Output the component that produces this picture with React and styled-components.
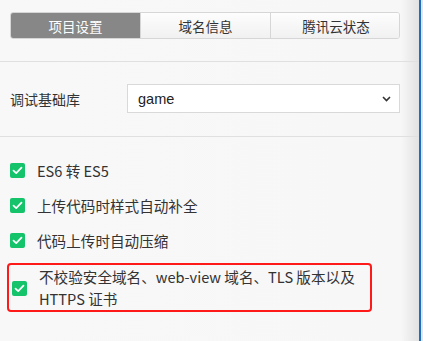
import React from "react";
import styled, { createGlobalStyle } from "styled-components";

const Global = createGlobalStyle`
  html, body { margin: 0; padding: 0; background: #f7f7f7; }
  body { font-family: "Noto Sans CJK SC", "Noto Sans", sans-serif; color: #333; }
`;

const Frame = styled.div`
  display: flex;
  width: 423px;
  height: 341px;
  overflow: hidden;
`;

const Panel = styled.div`
  width: 419px;
  height: 100%;
  background: linear-gradient(to right, #f8f8f8 0, #f7f7f7 calc(100% - 18px), #e2e2e2 100%);
  display: flex;
  flex-direction: column;
`;

const Edge = styled.div`
  width: 2px;
  background: #1d6dc4;
  border-right: 2px solid #dfe8f2;
`;

const Tabs = styled.div`
  display: grid;
  grid-template-columns: 129px 130px 131px;
  margin: 12px 0 0 10px;
  height: 27px;
  border-radius: 3px;
  overflow: hidden;
  border: 1px solid #d6d6d6;
  box-sizing: border-box;
  width: 390px;
`;

const Tab = styled.div`
  display: flex;
  align-items: center;
  justify-content: center;
  font-size: 13.5px;
  color: ${(p) => (p.$active ? "#fff" : "#333")};
  background: ${(p) => (p.$active ? "#878787" : "linear-gradient(#fdfdfd, #f1f1f1)")};
  border-left: ${(p) => (p.$first ? "none" : "1px solid #d6d6d6")};
`;

const Section = styled.div`
  padding: ${(p) => p.$pad};
  border-top: ${(p) => (p.$line ? "1px solid #e0e0e0" : "none")};
`;

const FieldRow = styled.div`
  display: flex;
  align-items: center;
  height: 29px;
`;

const Label = styled.div`
  width: 117px;
  padding-left: 10px;
  font-size: 14px;
  color: #333;
`;

const Select = styled.div`
  width: 273px;
  height: 29px;
  box-sizing: border-box;
  background: #fff;
  border: 1px solid #d9d9d9;
  display: flex;
  align-items: center;
  justify-content: space-between;
  padding: 0 8px 0 10px;
  font-family: "Liberation Sans", Arial, sans-serif;
  font-size: 14.5px;
  color: #222;
`;

const List = styled.div`
  display: flex;
  flex-direction: column;
`;

const Row = styled.div`
  display: flex;
  align-items: center;
  height: 35px;
  padding-left: 10px;
  gap: 12px;
  font-size: 14.6px;
  color: #333;
`;

const Marked = styled.div`
  display: flex;
  align-items: center;
  gap: 12px;
  margin: 5px 0 0 7px;
  width: 365px;
  box-sizing: border-box;
  border: 2px solid #ff1a1a;
  border-radius: 4px;
  padding: 1px 0 0 3px;
  font-size: 14.6px;
  line-height: 22px;
  color: #333;
`;

const Box = styled.div`
  flex: none;
  width: 15px;
  height: 15px;
  border-radius: 2px;
  background: #15c36b;
  display: flex;
  align-items: center;
  justify-content: center;
`;

const Text = styled.div`
  width: 322px;
`;

const Check = () => (
  <Box>
    <svg width="11" height="9" viewBox="0 0 11 9">
      <path d="M1.5 4.6 L4.2 7.2 L9.5 1.6" fill="none" stroke="#fff" strokeWidth="1.7" strokeLinecap="round" strokeLinejoin="round" />
    </svg>
  </Box>
);

export default function App() {
  return (
    <>
      <Global />
      <Frame>
        <Panel>
          <Section $pad="0 0 22px 0">
            <Tabs>
              <Tab $active $first>项目设置</Tab>
              <Tab>域名信息</Tab>
              <Tab>腾讯云状态</Tab>
            </Tabs>
          </Section>
          <Section $line $pad="22px 0 23px 0">
            <FieldRow>
              <Label>调试基础库</Label>
              <Select>
                <span>game</span>
                <svg width="9" height="6" viewBox="0 0 9 6">
                  <path d="M1 1 L4.5 4.5 L8 1" fill="none" stroke="#333" strokeWidth="1.6" />
                </svg>
              </Select>
            </FieldRow>
          </Section>
          <Section $line $pad="16px 0 0 0">
            <List>
              <Row><Check />ES6 转 ES5</Row>
              <Row><Check />上传代码时样式自动补全</Row>
              <Row><Check />代码上传时自动压缩</Row>
            </List>
            <Marked>
              <Check />
              <Text>不校验安全域名、web-view 域名、TLS 版本以及 HTTPS 证书</Text>
            </Marked>
          </Section>
        </Panel>
        <Edge />
      </Frame>
    </>
  );
}
